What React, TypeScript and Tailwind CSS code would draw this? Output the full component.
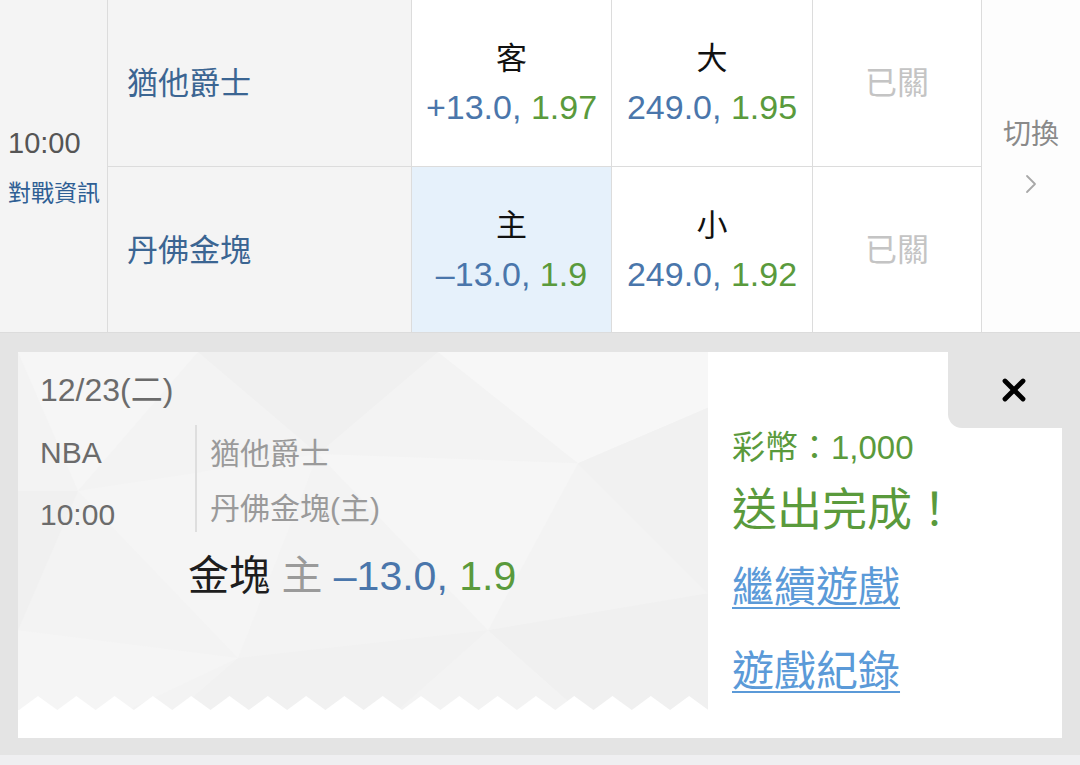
import { X } from "lucide-react"

const font = { fontFamily: '"Liberation Sans", "Noto Sans CJK TC", sans-serif' }

function Odds({ line, price }: { line: string; price: string }) {
  return (
    <div className="text-[34px] leading-[48px] whitespace-nowrap">
      <span className="text-[#4a76ab]">{line}, </span>
      <span className="text-[#5a9a3c]">{price}</span>
    </div>
  )
}

function BetCell({ label, line, price, active }: { label: string; line: string; price: string; active?: boolean }) {
  return (
    <div
      className={`flex flex-col items-center justify-center border-r border-b border-[#dcdcdc] ${
        active ? "bg-[#e6f1fb]" : "bg-white"
      }`}
    >
      <div className="text-[31px] leading-[48px] text-[#111]">{label}</div>
      <Odds line={line} price={price} />
    </div>
  )
}

function TicketPattern() {
  // faint low-poly facets behind the ticket
  return (
    <svg className="absolute inset-0 h-full w-full" viewBox="0 0 690 386" preserveAspectRatio="none">
      <rect width="690" height="386" fill="#f3f3f3" />
      <polygon points="0,0 180,0 60,150" fill="#f6f6f6" />
      <polygon points="180,0 420,0 300,110" fill="#f0f0f0" />
      <polygon points="420,0 690,0 690,60 560,120" fill="#f7f7f7" />
      <polygon points="560,120 690,60 690,260" fill="#f1f1f1" />
      <polygon points="0,150 60,150 0,300" fill="#f0f0f0" />
      <polygon points="60,150 300,110 220,330" fill="#f5f5f5" />
      <polygon points="300,110 560,120 470,300" fill="#f6f6f6" />
      <polygon points="220,330 470,300 380,386 160,386" fill="#f1f1f1" />
      <polygon points="470,300 690,260 690,386 560,386" fill="#f0f0f0" />
      <polygon points="0,300 220,330 110,386 0,386" fill="#f5f5f5" />
    </svg>
  )
}

function Zigzag() {
  const teeth = Array.from({ length: 19 }, (_, i) => i)
  return (
    <svg className="block h-[15px] w-full" viewBox="0 0 690 15" preserveAspectRatio="none">
      {teeth.map((i) => {
        const x = 1 + i * 38.3
        return <polygon key={i} points={`${x},15 ${x + 19},1 ${x + 38.3},15`} fill="#ffffff" strokeLinejoin="round" />
      })}
    </svg>
  )
}

export default function App() {
  return (
    <div className="h-[765px] w-[1080px] overflow-hidden bg-white" style={font}>
      {/* odds table */}
      <div className="grid grid-cols-[108px_304px_200px_201px_169px_98px] grid-rows-[167px_166px]">
        <div className="row-span-2 flex flex-col justify-center border-r border-b border-[#dcdcdc] bg-[#f4f4f4] pl-2">
          <div className="text-[29px] leading-[40px] text-[#555]">10:00</div>
          <div className="mt-[13px] text-[23px] leading-[34px] text-[#2f5f94]">對戰資訊</div>
        </div>
        <div className="flex items-center border-r border-b border-[#dcdcdc] bg-[#f4f4f4] pl-[19px] pt-[3px] text-[31px] text-[#3b6592]">
          猶他爵士
        </div>
        <BetCell label="客" line="+13.0" price="1.97" />
        <BetCell label="大" line="249.0" price="1.95" />
        <div className="flex items-center justify-center border-r border-b border-[#dcdcdc] bg-white text-[32px] text-[#c4c4c4]">
          已關
        </div>
        <div className="row-span-2 flex flex-col items-center border-b border-[#dcdcdc] bg-[#fdfdfd] pt-[116px]">
          <div className="text-[28px] leading-[38px] text-[#8a8a8a]">切換</div>
          <svg className="mt-[20px] h-[20px] w-[12px]" viewBox="0 0 12 20" fill="none">
            <path d="M2 2 L10 10 L2 18" stroke="#a8a8a8" strokeWidth="1.8" strokeLinecap="round" strokeLinejoin="round" />
          </svg>
        </div>
        <div className="flex items-center border-r border-b border-[#dcdcdc] bg-[#f4f4f4] pl-[19px] pt-[3px] text-[31px] text-[#3b6592]">
          丹佛金塊
        </div>
        <BetCell label="主" line="–13.0" price="1.9" active />
        <BetCell label="小" line="249.0" price="1.92" />
        <div className="flex items-center justify-center border-r border-b border-[#dcdcdc] bg-white text-[32px] text-[#c4c4c4]">
          已關
        </div>
      </div>

      {/* confirmation card */}
      <div className="bg-[#e4e4e4] px-[18px] pt-[19px] pb-[17px]">
        <div className="relative flex h-[386px] bg-white">
          <div className="relative flex w-[690px] flex-col">
            <div className="relative flex-1 overflow-hidden">
              <TicketPattern />
              <div className="relative pl-[22px] pt-[18px]">
                <div className="text-[32px] leading-[40px] text-[#6b6b6b]">12/23(二)</div>
                <div className="mt-[12px] flex">
                  <div className="w-[155px] text-[30px] leading-[62px] text-[#6b6b6b]">
                    <div>NBA</div>
                    <div>10:00</div>
                  </div>
                  <div className="mt-[3px] h-[107px] border-l-2 border-[#dedede] pl-[13px] pt-[1px] text-[30px] leading-[55px] text-[#9a9a9a]">
                    <div>猶他爵士</div>
                    <div>丹佛金塊(主)</div>
                  </div>
                </div>
                <div className="ml-[148px] mt-[4px] whitespace-nowrap text-[41px] leading-[52px]">
                  <span className="text-[#1e1e1e]">金塊 </span>
                  <span className="text-[#9a9a9a]">主 </span>
                  <span className="text-[#4a76ab]">–13.0, </span>
                  <span className="text-[#5a9a3c]">1.9</span>
                </div>
              </div>
            </div>
            <div className="relative -mt-[15px]">
              <Zigzag />
            </div>
            <div className="h-[28px] bg-white" />
          </div>

          <div className="flex flex-1 flex-col pl-[24px] pt-[76px]">
            <div className="text-[33px] leading-[40px] text-[#5a9a3c]">彩幣：1,000</div>
            <div className="mt-[17px] text-[45px] leading-[52px] text-[#5a9a3c]">送出完成！</div>
            <a className="mt-[26px] text-[42px] leading-[50px] text-[#5b9ad8] underline decoration-2 underline-offset-[5px]">
              繼續遊戲
            </a>
            <a className="mt-[34px] text-[42px] leading-[50px] text-[#5b9ad8] underline decoration-2 underline-offset-[5px]">
              遊戲紀錄
            </a>
          </div>

          {/* close tab */}
          <button className="absolute top-0 right-[-18px] flex h-[76px] w-[132px] items-center justify-center rounded-bl-[14px] bg-[#e4e4e4]">
            <X className="h-[36px] w-[36px] text-black" strokeWidth={3.2} />
          </button>
        </div>
      </div>
      <div className="h-[10px] bg-[#efeff1]" />
    </div>
  )
}
